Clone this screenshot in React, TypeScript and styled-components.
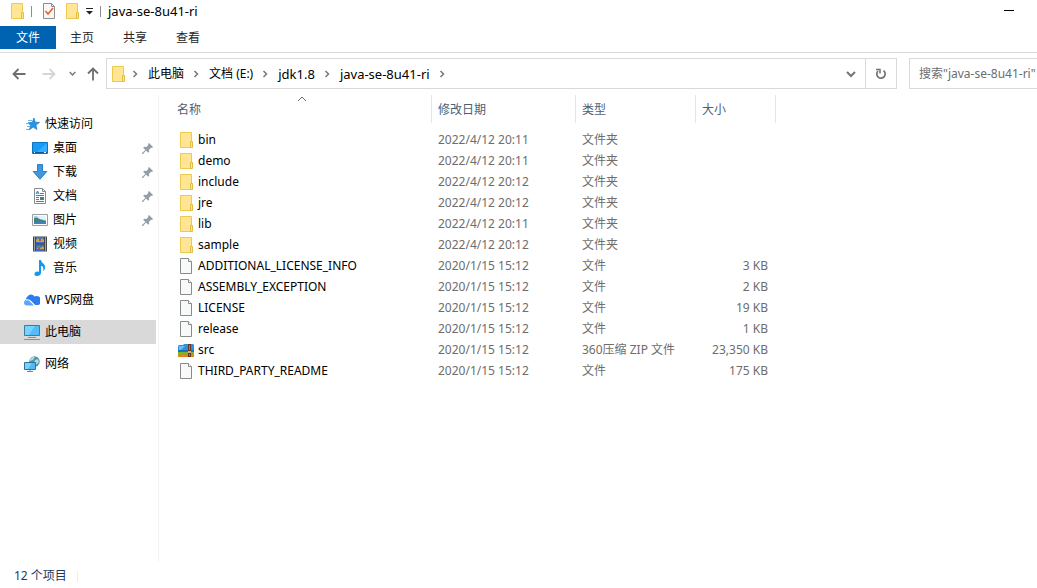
import React from 'react';
import styled, { createGlobalStyle } from 'styled-components';

const GlobalStyle = createGlobalStyle`
  * { box-sizing: border-box; }
  body {
    margin: 0;
    background: #fff;
    color: #000;
    font-family: "Noto Sans", "Noto Sans CJK SC", sans-serif;
    font-size: 12px;
    line-height: 16px;
    overflow: hidden;
  }
  button, input { font: inherit; color: inherit; border: 0; padding: 0; background: none; }
  a { color: inherit; text-decoration: none; }
  ul, ol { list-style: none; margin: 0; padding: 0; }
  svg { display: block; flex: none; }
`;

const Window = styled.div`
  display: flex;
  flex-direction: column;
  min-height: 100vh;
`;

const TitleBar = styled.header`
  display: flex;
  align-items: center;
  height: 26px;
  padding: 0 23px 4px 9px;
`;

const QuickTools = styled.div`
  display: flex;
  align-items: center;
  gap: 6px;
`;

const ToolButton = styled.button<{ $width: number }>`
  display: flex;
  align-items: center;
  justify-content: center;
  width: ${(p) => p.$width}px;
  height: 22px;
`;

const Divider = styled.span<{ $tone?: string }>`
  width: 1px;
  height: 11px;
  background: ${(p) => p.$tone || '#8c8c8c'};
`;

const Title = styled.h1`
  flex: 1;
  margin: 0 0 0 7px;
  font-size: 13px;
  font-weight: 400;
  line-height: 22px;
`;

const Ribbon = styled.nav`
  display: flex;
  height: 27px;
  border-bottom: 1px solid #dadbdc;
`;

const RibbonTab = styled.button<{ $active?: boolean }>`
  width: ${(p) => (p.$active ? 56 : 53)}px;
  height: 23px;
  padding-right: ${(p) => (p.$active ? 0 : 1)}px;
  line-height: 23px;
  color: ${(p) => (p.$active ? '#fff' : '#262626')};
  background: ${(p) => (p.$active ? '#0063b1' : 'transparent')};
`;

const AddressRow = styled.div`
  display: flex;
  align-items: center;
  padding: 5px 0 6px 9px;
`;

const NavButtons = styled.div`
  display: flex;
  align-items: center;
  width: 97px;
  gap: 10px;
`;

const AddressBar = styled.div`
  display: flex;
  align-items: center;
  flex: 1;
  height: 31px;
  border: 1px solid #d9d9d9;
  padding-left: 3px;
`;

const Crumbs = styled.ol`
  display: flex;
  flex: 1;
`;

const Crumb = styled.li<{ $root?: boolean; $latin?: boolean }>`
  display: flex;
  align-items: center;
  gap: 9px;
  padding-left: ${(p) => (p.$root ? 6 : 10)}px;
  font-size: ${(p) => (p.$latin ? 13 : 12)}px;
`;

const BarButton = styled.button<{ $ruled?: boolean }>`
  display: flex;
  align-items: center;
  justify-content: center;
  width: ${(p) => (p.$ruled ? 31 : 29)}px;
  height: 29px;
  border-left: ${(p) => (p.$ruled ? '1px solid #d9d9d9' : '0')};
`;

const Search = styled.input`
  width: 128px;
  height: 31px;
  margin-left: 12px;
  padding-left: 9px;
  border: 1px solid #d9d9d9;
  border-right: 0;
  border-radius: 0;
  outline: 0;
  &::placeholder { color: #6d6d6d; opacity: 1; }
`;

const Body = styled.div`
  display: flex;
  flex: 1;
`;

const Sidebar = styled.nav`
  width: 159px;
  padding: 17px 2px 0 0;
  border-right: 1px solid #f3f3f3;
`;

const Group = styled.ul`
  margin-bottom: 8px;
`;

const Place = styled.a<{ $child?: boolean; $active?: boolean }>`
  display: flex;
  align-items: center;
  gap: 5px;
  height: 24px;
  padding: 0 2px 0 ${(p) => (p.$child ? 32 : 24)}px;
  background: ${(p) => (p.$active ? '#d9d9d9' : 'transparent')};
`;

const PlaceName = styled.span`
  flex: 1;
`;

const Files = styled.main`
  flex: 1;
`;

const Table = styled.table`
  width: 617px;
  table-layout: fixed;
  border-collapse: separate;
  border-spacing: 0;
`;

const Head = styled.th<{ $width: number; $first?: boolean }>`
  width: ${(p) => p.$width}px;
  height: 34px;
  padding: 0 0 6px;
  font-weight: 400;
  text-align: left;
  color: #4c607a;
  > div {
    display: flex;
    align-items: center;
    position: relative;
    height: 28px;
    padding: 2px 0 0 ${(p) => (p.$first ? 18 : 6)}px;
    border-right: 1px solid #e5e5e5;
  }
`;

const SortMark = styled.svg`
  position: absolute;
  top: 1px;
  left: 138px;
`;

const Cell = styled.td<{ $end?: boolean }>`
  height: 21px;
  padding: 0 ${(p) => (p.$end ? 8 : 0)}px 0 6px;
  color: #6d6d6d;
  white-space: nowrap;
  text-align: ${(p) => (p.$end ? 'right' : 'left')};
`;

const NameCell = styled(Cell)`
  padding: 0 0 0 19px;
  color: #000;
`;

const FileLink = styled.a`
  display: flex;
  align-items: center;
  gap: 4px;
  height: 21px;
`;

const StatusBar = styled.footer`
  display: flex;
  align-items: center;
  gap: 10px;
  height: 26px;
  padding: 2px 0 0 14px;
  color: #1e395b;
`;

const Folder = () => (
  <svg width="16" height="18" viewBox="0 0 16 18">
    <path d="M2.5 1.500h11v15h-11z" fill="#ffe594" stroke="#edc94e" />
    <path d="M12.500 10.500h2v6h-2z" fill="#ffe594" stroke="#e2bd43" />
  </svg>
);

const FileIcon = () => (
  <svg width="16" height="18" viewBox="0 0 16 18">
    <path d="M2.5 1.500h8l3 3v12h-11z" fill="#f8f9f9" stroke="#8a8a8a" />
    <path d="M10.500 1.500v3h3" fill="#fff" stroke="#8a8a8a" />
  </svg>
);

const Archive = () => (
  <svg width="16" height="16" viewBox="0 0 16 16">
    <path d="M0 4l1-1h4l1-1h9l1 1v6H0z" fill="#2c92dd" />
    <path d="M1 4h6L3 8H1z" fill="#65bdf2" />
    <path d="M0 8h16v2H0z" fill="#1a71bc" />
    <path d="M0 10h16v3H0z" fill="#78b72a" />
    <path d="M0 12.500h16V15H0z" fill="#ef7c22" />
    <path d="M10 2h3v13h-3z" fill="#65351f" />
    <path d="M11.500 3v5M11.500 12v2" stroke="#a57c50" />
    <path d="M10 9h3v2h-3z" fill="#d3b184" />
  </svg>
);

const CheckPage = () => (
  <svg width="14" height="18" viewBox="0 0 14 18">
    <path d="M2.5 1.500h8l3 3v12h-11z" fill="#f7f7f7" stroke="#8e8e8e" />
    <path d="M10.500 1.500v3h3" fill="none" stroke="#8e8e8e" />
    <path d="M4.500 9l2.500 3 5-6" fill="none" stroke="#e5632a" strokeWidth="1.600" />
  </svg>
);

const Chevron = () => (
  <svg width="6" height="8" viewBox="0 0 6 8">
    <path d="M1.500 1L4.500 4l-3 3" fill="none" stroke="#777" strokeWidth="1.500" />
  </svg>
);

const ChevronDown = ({ size }: { size: number }) => (
  <svg width={size} height={size} viewBox="0 0 10 10">
    <path d="M1 3l4 4 4-4" fill="none" stroke="#757575" strokeWidth="2" />
  </svg>
);

const Arrow = ({ turn, color }: { turn: number; color: string }) => (
  <svg width="14" height="14" viewBox="0 0 14 14">
    <path
      d="M13.500 7H2M6.500 2L1.500 7l5 5"
      transform={`rotate(${turn} 7 7)`}
      fill="none"
      stroke={color}
      strokeWidth="1.800"
    />
  </svg>
);

const Refresh = () => (
  <svg width="12" height="12" viewBox="0 0 12 12">
    <path d="M3 3a4.200 4.200 0 1 0 5.500-.4" fill="none" stroke="#717171" strokeWidth="1.700" />
    <path d="M1 1.500h4v4" fill="none" stroke="#717171" strokeWidth="1.500" />
  </svg>
);

const Pin = () => (
  <svg width="12" height="12" viewBox="0 0 12 12">
    <path d="M7 1l4 4-1 1-1-.3-2 2 .2 2-1 1-2.100-2.200L1 12H0v-1l3.400-3.100L1.200 5.800l1-1 2.200.1 2-2L6 2z" fill="#929da7" />
  </svg>
);

const StarIcon = () => (
  <svg width="16" height="16" viewBox="0 0 16 16">
    <path d="M10 2l1.200 4.300 4.300.1-3.600 2.700 1 4.400-3.700-2.400-3.900 2.700 1.500-4.400L4 6.700l4.200-.2z" fill="#2795e5" stroke="#1678c4" strokeWidth=".7" />
    <path d="M4 4.500h4M2 7.500h3M3 10.500h3M2 13.500h3" stroke="#63b7ee" />
  </svg>
);

const DesktopIcon = () => (
  <svg width="16" height="16" viewBox="0 0 16 16">
    <path d="M.5 2.500h15v11H.5z" fill="#169bf7" stroke="#0c73bd" />
    <path d="M15 3v9H5z" fill="#39adff" />
    <path d="M1 12.500h14" stroke="#075c9c" />
    <path d="M2 12.500h1M12 12.500h2" stroke="#fff" />
  </svg>
);

const DownloadIcon = () => (
  <svg width="16" height="16" viewBox="0 0 16 16">
    <path d="M5.500.5h5v7h4.300L8 15.300 1.200 7.500h4.300z" fill="#3e98e0" stroke="#2b7fc5" />
  </svg>
);

const DocumentIcon = () => (
  <svg width="16" height="16" viewBox="0 0 16 16">
    <path d="M2.500.5h8l3 3v12h-11z" fill="#fff" stroke="#858c91" />
    <path d="M10.500.5v3h3" fill="none" stroke="#858c91" />
    <path d="M4 6l1.500-3L7 6M4.500 5h2M8 5.500h4M4 7.500h8M4 9.500h3M4 11.500h3M4 13.500h8" fill="none" stroke="#3086c2" />
    <path d="M8 9h4v3H8z" fill="#477f83" />
  </svg>
);

const PictureIcon = () => (
  <svg width="16" height="16" viewBox="0 0 16 16">
    <path d="M.5 2.500h15v11H.5z" fill="#fff" stroke="#989da0" />
    <path d="M2 4h12v8H2z" fill="#9fd3ef" />
    <path d="M5 4h9v4l-6-1z" fill="#e3f3fb" />
    <path d="M2 6q3-1 5 1l7 2v1H2z" fill="#477e78" />
    <path d="M2 10q6-1 12 0v2H2z" fill="#3f83b8" />
  </svg>
);

const VideoIcon = () => (
  <svg width="16" height="16" viewBox="0 0 16 16">
    <path d="M1 .5h14v15H1z" fill="#43464b" />
    <path d="M4 1h8v6.500H4zM4 8.500h8V15H4z" fill="#3b6fc4" />
    <path d="M4 4l2-2 2 2 2-2 2 2v2H4zM5 12l2-2 2 2 2-2 1 2v1H5z" fill="#c9a549" />
    <path d="M7 3h2v2H7zM6 11h2v2H6z" fill="#ad4d72" />
    <path d="M2.500 1.500v14M13.500 1.500v14" stroke="#fff" strokeDasharray="1 1" />
  </svg>
);

const MusicIcon = () => (
  <svg width="16" height="16" viewBox="0 0 16 16">
    <path d="M7 0h2c0 3 5 4 4 8-.3 1.500-1 2.500-2 3 1-4-.5-5-2-5v7c0 2-2 3-4 3s-3-1-2.500-2.500C3 12 5 11 7 12z" fill="#1597ed" />
  </svg>
);

const CloudIcon = () => (
  <svg width="16" height="16" viewBox="0 0 16 16">
    <path d="M2 8A4 4 0 0 1 3.500 4.500a4.200 4.200 0 0 1 7 0A4.500 4.500 0 0 1 14.500 13H11L6 8z" fill="#2b7cf0" />
    <path d="M0 10.500A3 3 0 0 1 4.500 8L10 13.500H3a3 3 0 0 1-3-3z" fill="#5da7fa" />
    <path d="M2 8q2.500-1 4 .5l5 5" fill="none" stroke="#fff" strokeWidth=".9" />
  </svg>
);

const ComputerIcon = () => (
  <svg width="16" height="16" viewBox="0 0 16 16">
    <path d="M.5 1.500h15v10H.5z" fill="#52bcfa" stroke="#397c9e" />
    <path d="M1 2h10L5 11H1z" fill="#78d2ff" />
    <path d="M4 13.500h8M0 15.500h16" stroke="#7796a7" />
  </svg>
);

const NetworkIcon = () => (
  <svg width="16" height="16" viewBox="0 0 16 16">
    <circle cx="10.500" cy="5.500" r="5.200" fill="#4c91ad" />
    <path d="M6 3q3-3 5-2L9 4 6 5zM11 4l3-1 1 3-3 3-2-2z" fill="#b1d9dc" />
    <path d="M.5 6.500h11v7H.5z" fill="#50b8f2" stroke="#27739d" />
    <path d="M1 7h7l-4 6H1z" fill="#7ad1fb" />
    <path d="M3 15.500h6M6 14v1" stroke="#668ca2" />
  </svg>
);

type PlaceItem = { name: string; icon: React.FC; child?: boolean; pinned?: boolean; active?: boolean };

const groups: PlaceItem[][] = [
  [
    { name: '快速访问', icon: StarIcon },
    { name: '桌面', icon: DesktopIcon, child: true, pinned: true },
    { name: '下载', icon: DownloadIcon, child: true, pinned: true },
    { name: '文档', icon: DocumentIcon, child: true, pinned: true },
    { name: '图片', icon: PictureIcon, child: true, pinned: true },
    { name: '视频', icon: VideoIcon, child: true },
    { name: '音乐', icon: MusicIcon, child: true },
  ],
  [{ name: 'WPS网盘', icon: CloudIcon }],
  [{ name: '此电脑', icon: ComputerIcon, active: true }],
  [{ name: '网络', icon: NetworkIcon }],
];

const crumbs = [
  { name: '此电脑' },
  { name: '文档 (E:)' },
  { name: 'jdk1.8', latin: true },
  { name: 'java-se-8u41-ri', latin: true },
];

const files: [string, React.FC, string, string, string][] = [
  ['bin', Folder, '2022/4/12 20:11', '文件夹', ''],
  ['demo', Folder, '2022/4/12 20:11', '文件夹', ''],
  ['include', Folder, '2022/4/12 20:12', '文件夹', ''],
  ['jre', Folder, '2022/4/12 20:12', '文件夹', ''],
  ['lib', Folder, '2022/4/12 20:11', '文件夹', ''],
  ['sample', Folder, '2022/4/12 20:12', '文件夹', ''],
  ['ADDITIONAL_LICENSE_INFO', FileIcon, '2020/1/15 15:12', '文件', '3 KB'],
  ['ASSEMBLY_EXCEPTION', FileIcon, '2020/1/15 15:12', '文件', '2 KB'],
  ['LICENSE', FileIcon, '2020/1/15 15:12', '文件', '19 KB'],
  ['release', FileIcon, '2020/1/15 15:12', '文件', '1 KB'],
  ['src', Archive, '2020/1/15 15:12', '360压缩 ZIP 文件', '23,350 KB'],
  ['THIRD_PARTY_README', FileIcon, '2020/1/15 15:12', '文件', '175 KB'],
];

export default function App() {
  return (
    <>
      <GlobalStyle />
      <Window>
        <TitleBar>
          <QuickTools>
            <Folder />
            <Divider />
            <ToolButton $width={20} aria-label="属性"><CheckPage /></ToolButton>
            <ToolButton $width={16} aria-label="新建文件夹"><Folder /></ToolButton>
            <ToolButton $width={8} aria-label="自定义快速访问工具栏">
              <svg width="8" height="8" viewBox="0 0 8 8">
                <path d="M0 1.500h7" stroke="#222" />
                <path d="M0 4h7L3.500 7.500z" fill="#222" />
              </svg>
            </ToolButton>
            <Divider />
          </QuickTools>
          <Title>java-se-8u41-ri</Title>
          <ToolButton $width={10} aria-label="最小化">
            <svg width="10" height="2" viewBox="0 0 10 2"><path d="M0 .5h10" stroke="#000" /></svg>
          </ToolButton>
        </TitleBar>

        <Ribbon>
          <RibbonTab $active>文件</RibbonTab>
          <RibbonTab>主页</RibbonTab>
          <RibbonTab>共享</RibbonTab>
          <RibbonTab>查看</RibbonTab>
        </Ribbon>

        <AddressRow>
          <NavButtons>
            <ToolButton $width={20} aria-label="后退"><Arrow turn={0} color="#6f6f6f" /></ToolButton>
            <ToolButton $width={20} aria-label="前进"><Arrow turn={180} color="#d5d5d5" /></ToolButton>
            <ToolButton $width={7} aria-label="最近位置"><ChevronDown size={7} /></ToolButton>
            <ToolButton $width={14} aria-label="上移"><Arrow turn={90} color="#6f6f6f" /></ToolButton>
          </NavButtons>
          <AddressBar>
            <Folder />
            <Crumbs>
              <Crumb $root><Chevron /></Crumb>
              {crumbs.map(({ name, latin }) => (
                <Crumb key={name} $latin={latin}><a href="#crumb">{name}</a><Chevron /></Crumb>
              ))}
            </Crumbs>
            <BarButton aria-label="以前的位置"><ChevronDown size={10} /></BarButton>
            <BarButton $ruled aria-label="刷新"><Refresh /></BarButton>
          </AddressBar>
          <Search aria-label="搜索" placeholder={'搜索"java-se-8u41-ri"'} />
        </AddressRow>

        <Body>
          <Sidebar>
            {groups.map((group) => (
              <Group key={group[0].name}>
                {group.map(({ name, icon: Icon, child, pinned, active }) => (
                  <li key={name}>
                    <Place href="#place" $child={child} $active={active}>
                      <Icon />
                      <PlaceName>{name}</PlaceName>
                      {pinned && <Pin />}
                    </Place>
                  </li>
                ))}
              </Group>
            ))}
          </Sidebar>
          <Files>
            <Table>
              <thead>
                <tr>
                  <Head $width={273} $first>
                    <div>
                      名称
                      <SortMark width="10" height="6" viewBox="0 0 10 6">
                        <path d="M1 5l4-4 4 4" fill="none" stroke="#6d6d6d" />
                      </SortMark>
                    </div>
                  </Head>
                  <Head $width={144}><div>修改日期</div></Head>
                  <Head $width={120}><div>类型</div></Head>
                  <Head $width={80}><div>大小</div></Head>
                </tr>
              </thead>
              <tbody>
                {files.map(([name, Icon, date, type, size]) => (
                  <tr key={name}>
                    <NameCell><FileLink href="#file"><Icon />{name}</FileLink></NameCell>
                    <Cell>{date}</Cell>
                    <Cell>{type}</Cell>
                    <Cell $end>{size}</Cell>
                  </tr>
                ))}
              </tbody>
            </Table>
          </Files>
        </Body>

        <StatusBar>
          <span>12 个项目</span>
          <Divider $tone="#ededed" />
        </StatusBar>
      </Window>
    </>
  );
}
